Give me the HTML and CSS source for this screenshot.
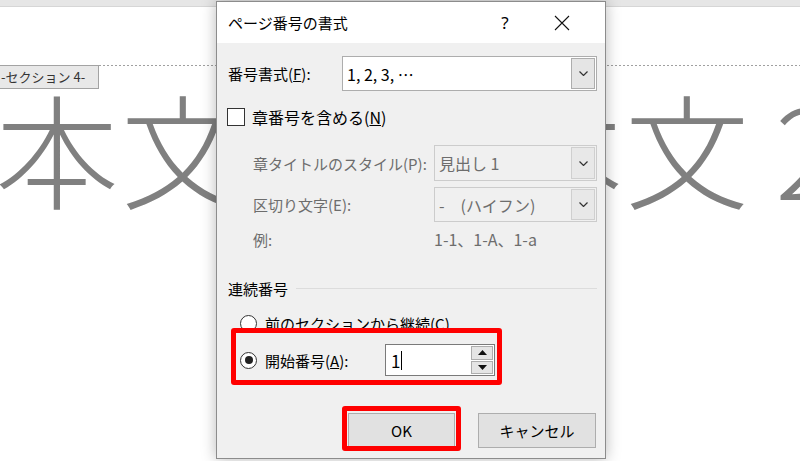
FILE: index.html
```html
<!DOCTYPE html>
<html lang="ja">
<head>
    <meta charset="UTF-8">
    <meta name="viewport" content="width=device-width, initial-scale=1.0">
    <title>ページ番号の書式</title>
    <link rel="stylesheet" href="styles.css">
</head>
<body>
    <div class="doc">
        <div class="doc-top"></div>
        <div class="section-row">
            <div class="section-label">-セクション&nbsp;4-</div>
            <div class="section-line"></div>
        </div>
        <div class="body-text">本文本文本文<span class="num">2</span></div>
    </div>

    <div class="dialog">
        <div class="title-bar">
            <span class="title">ページ番号の書式</span>
            <span class="help">?</span>
            <span class="close">
                <svg width="16" height="16" viewBox="0 0 16 16"><path d="M1 1L15 15M15 1L1 15" stroke="#111" stroke-width="1.1" fill="none"/></svg>
            </span>
        </div>
        <div class="dialog-body">
            <div class="row row-format">
                <span class="label-main">番号書式(<u>F</u>):</span>
                <div class="combo">
                    <span class="combo-value">1, 2, 3, …</span>
                    <span class="combo-btn"><svg width="9" height="5" viewBox="0 0 9 5"><polyline points="0.5,0.5 4.5,4.5 8.5,0.5" stroke="#333" stroke-width="1.2" fill="none"/></svg></span>
                </div>
            </div>

            <div class="row row-check">
                <span class="checkbox"></span>
                <span>章番号を含める(<u>N</u>)</span>
            </div>

            <div class="row row-sub row-style">
                <span class="label-sub">章タイトルのスタイル(P):</span>
                <div class="combo disabled">
                    <span class="combo-value">見出し 1</span>
                    <span class="combo-btn"><svg width="9" height="5" viewBox="0 0 9 5"><polyline points="0.5,0.5 4.5,4.5 8.5,0.5" stroke="#333" stroke-width="1.2" fill="none"/></svg></span>
                </div>
            </div>

            <div class="row row-sub row-sep">
                <span class="label-sub">区切り文字(E):</span>
                <div class="combo disabled">
                    <span class="combo-value">-　(ハイフン)</span>
                    <span class="combo-btn"><svg width="9" height="5" viewBox="0 0 9 5"><polyline points="0.5,0.5 4.5,4.5 8.5,0.5" stroke="#333" stroke-width="1.2" fill="none"/></svg></span>
                </div>
            </div>

            <div class="row row-sub row-example">
                <span class="label-sub">例:</span>
                <span class="example">1-1、1-A、1-a</span>
            </div>

            <div class="group-head">
                <span>連続番号</span>
                <span class="group-line"></span>
            </div>

            <div class="row row-radio row-continue">
                <span class="radio"></span>
                <span>前のセクションから継続(C)</span>
            </div>

            <div class="row row-radio row-start">
                <span class="radio checked"><span class="dot"></span></span>
                <span class="label-start">開始番号(<u>A</u>):</span>
                <div class="spin">
                    <span class="spin-value">1<span class="caret"></span></span>
                    <span class="spin-btns">
                        <span class="spin-btn"><svg width="9" height="5" viewBox="0 0 9 5"><polygon points="0,5 4.5,0 9,5" fill="#111"/></svg></span>
                        <span class="spin-btn"><svg width="9" height="5" viewBox="0 0 9 5"><polygon points="0,0 9,0 4.5,5" fill="#111"/></svg></span>
                    </span>
                </div>
            </div>

            <div class="buttons">
                <button class="btn btn-ok">OK</button>
                <button class="btn btn-cancel">キャンセル</button>
            </div>
        </div>
        <div class="highlight hl-start"></div>
        <div class="highlight hl-ok"></div>
    </div>
</body>
</html>
```

FILE: styles.css
```css
html, body {
    margin: 0;
    padding: 0;
}
body {
    width: 800px;
    height: 461px;
    overflow: hidden;
    background: #fff;
    font-family: "Noto Sans CJK JP", "Noto Sans", sans-serif;
    position: relative;
}
.doc {
    display: flex;
    flex-direction: column;
}
.doc-top {
    height: 6px;
    background: #e6e6e6;
    border-bottom: 1px solid #d6d6d6;
}
.section-row {
    display: flex;
    align-items: flex-start;
    margin-top: 58px;
}
.section-label {
    width: 100px;
    height: 24px;
    margin-left: -1px;
    padding-left: 1px;
    box-sizing: border-box;
    background: #e8e8e8;
    border: 1px solid #a3a3a3;
    font-size: 13px;
    line-height: 22px;
    color: #333;
    white-space: nowrap;
    overflow: hidden;
}
.section-line {
    flex: 1;
    height: 1px;
    background: repeating-linear-gradient(90deg, #a0a0a0 0 2px, transparent 2px 4px);
}
.body-text {
    font-size: 124px;
    line-height: 124px;
    color: #808080;
    margin-top: -5px;
    margin-left: -5px;
    letter-spacing: 2px;
    white-space: nowrap;
    font-weight: 300;
}
.body-text .num {
    margin-left: 24px;
}

/* dialog */
.dialog {
    position: absolute;
    left: 216px;
    top: 1px;
    width: 390px;
    height: 458px;
    box-sizing: border-box;
    border: 1px solid #8c8c8c;
    box-shadow: 0 0 14px rgba(0, 0, 0, 0.28);
    display: flex;
    flex-direction: column;
    background: #f0f0f0;
    color: #000;
}
.title-bar {
    height: 41px;
    background: #fff;
    display: flex;
    align-items: center;
    padding-left: 11px;
    font-size: 15px;
}
.title {
    flex: 1;
}
.help {
    width: 30px;
    text-align: center;
    font-size: 17px;
    font-family: "Noto Sans", sans-serif;
    color: #000;
}
.close {
    width: 30px;
    margin-left: 27px;
    margin-right: 28px;
    display: flex;
    justify-content: center;
}
.dialog-body {
    flex: 1;
    padding: 13px 8px 0 11px;
    display: flex;
    flex-direction: column;
    font-size: 15px;
}
.row {
    display: flex;
    align-items: center;
}
.row-format {
    height: 35px;
}
.label-main {
    width: 114px;
}
.combo {
    flex: 1;
    display: flex;
    height: 100%;
    box-sizing: border-box;
    border: 1px solid #adadad;
    background: #fff;
    padding: 1px;
}
.combo-value {
    flex: 1;
    display: flex;
    align-items: center;
    padding-left: 3px;
    font-size: 16px;
}
.combo-btn {
    width: 24px;
    box-sizing: border-box;
    background: #e5e5e5;
    border: 1px solid #adadad;
    display: flex;
    align-items: center;
    justify-content: center;
}
.combo.disabled {
    background: #f0f0f0;
    border-color: #cccccc;
}
.combo.disabled .combo-value {
    color: #6d6d6d;
}
.combo.disabled .combo-btn {
    background: #e8e8e8;
    border-color: #cfcfcf;
}
.row-check {
    margin-top: 17px;
    height: 18px;
    margin-left: -1px;
    gap: 7px;
    font-size: 16px;
}
.checkbox {
    width: 18px;
    height: 18px;
    box-sizing: border-box;
    border: 1px solid #333;
    background: #fff;
}
.row-sub {
    padding-left: 25px;
    color: #6d6d6d;
}
.label-sub {
    width: 181px;
    white-space: nowrap;
}
.row-style {
    margin-top: 19px;
    height: 36px;
}
.row-sep {
    margin-top: 6px;
    height: 35px;
}
.row-example {
    margin-top: 8px;
    height: 18px;
}
.example {
    font-size: 16px;
}
.group-head {
    margin-top: 31px;
    height: 18px;
    display: flex;
    align-items: center;
    gap: 8px;
}
.group-line {
    flex: 1;
    height: 1px;
    background: #dcdcdc;
}
.row-radio {
    padding-left: 12px;
    gap: 8px;
}
.radio {
    width: 17px;
    height: 17px;
    box-sizing: border-box;
    border: 1px solid #333;
    border-radius: 50%;
    background: #fff;
    display: flex;
    align-items: center;
    justify-content: center;
}
.radio .dot {
    width: 8px;
    height: 8px;
    border-radius: 50%;
    background: #222;
}
.row-continue {
    margin-top: 17px;
    height: 18px;
}
.row-start {
    margin-top: 12px;
    height: 32px;
}
.label-start {
    width: 112px;
}
.spin {
    width: 110px;
    height: 32px;
    box-sizing: border-box;
    border: 1px solid #7a7a7a;
    background: #fff;
    display: flex;
    padding: 1px;
}
.spin-value {
    flex: 1;
    display: flex;
    align-items: center;
    padding-left: 4px;
    font-size: 17px;
}
.caret {
    width: 1px;
    height: 19px;
    background: #000;
    margin-left: 1px;
}
.spin-btns {
    width: 22px;
    display: flex;
    flex-direction: column;
    gap: 1px;
}
.spin-btn {
    flex: 1;
    box-sizing: border-box;
    background: #e5e5e5;
    border: 1px solid #adadad;
    display: flex;
    align-items: center;
    justify-content: center;
}
.buttons {
    margin-top: 37px;
    display: flex;
    justify-content: flex-end;
    gap: 23px;
    padding-right: 1px;
}
.btn {
    height: 35px;
    box-sizing: border-box;
    background: #e1e1e1;
    border: 1px solid #adadad;
    font-family: "Noto Sans CJK JP", "Noto Sans", sans-serif;
    font-size: 15px;
    color: #000;
    padding: 0;
}
.btn-ok {
    width: 107px;
}
.btn-cancel {
    width: 118px;
}
.highlight {
    position: absolute;
    box-sizing: border-box;
    border: 5px solid #ff0000;
    border-radius: 3px;
}
.hl-start {
    left: 14px;
    top: 326px;
    width: 271px;
    height: 57px;
}
.hl-ok {
    left: 125px;
    top: 404px;
    width: 119px;
    height: 45px;
}
```
